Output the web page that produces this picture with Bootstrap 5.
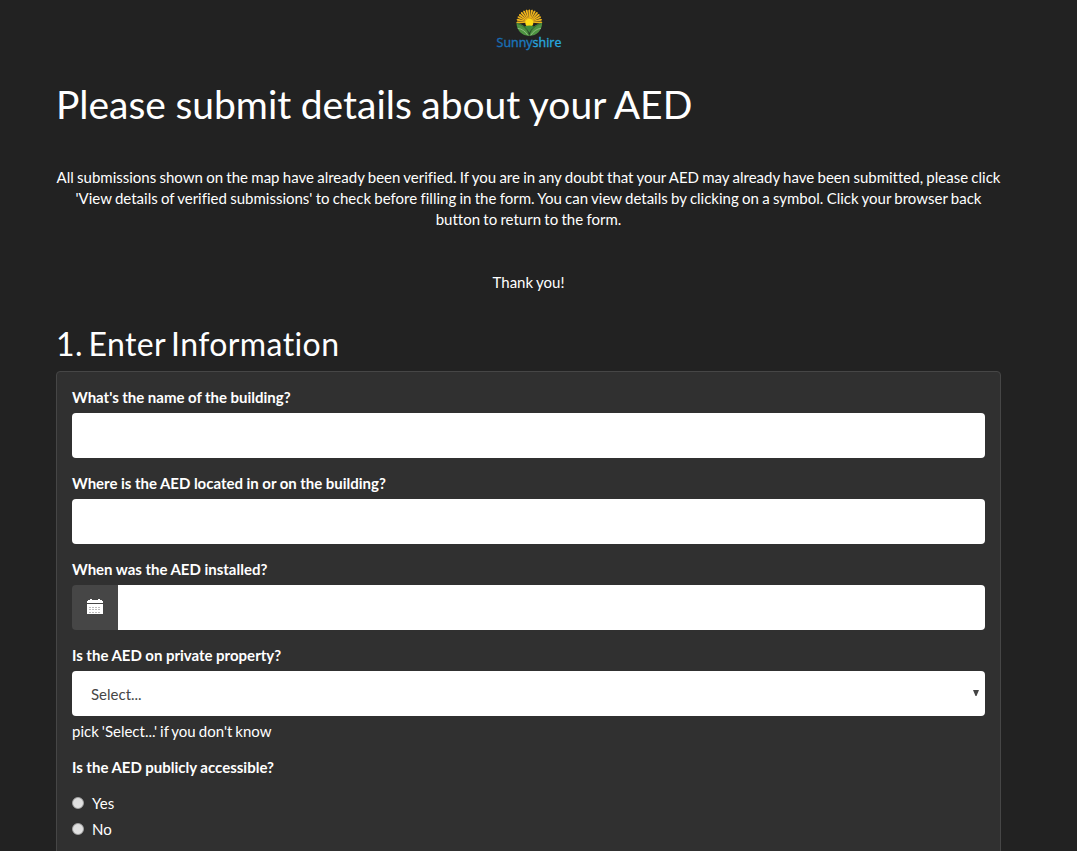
<!DOCTYPE html>
<html lang="en">
<head>
  <meta charset="UTF-8" />
  <meta name="viewport" content="width=device-width, initial-scale=1" />
  <title>Submit AED details</title>
  <!-- Bootstrap CSS -->
  <link
    href="https://cdn.jsdelivr.net/npm/bootstrap@5.3.2/dist/css/bootstrap.min.css"
    rel="stylesheet"
  />
  <style>
    html,
    body {
      height: 100%;
      overflow: hidden;
    }
    body {
      background: #222;
      color: #fff;
      font-family: Lato, 'Helvetica Neue', Arial, sans-serif;
      font-size: 15px;
      line-height: 21px;
      font-variant-ligatures: none;
      word-spacing: -0.55px;
    }
    .form-page {
      width: 945px;
      height: 851px;
      margin-left: 56px;
      overflow: hidden;
    }
    .site-logo {
      height: 83px;
      padding-top: 5px;
    }
    h1 {
      font-size: 39px;
      font-weight: 400;
      line-height: 43px;
      margin-bottom: 41px;
    }
    h2 {
      font-size: 32px;
      font-weight: 400;
      line-height: 35px;
      margin-bottom: 10px;
      letter-spacing: 0.4px;
      word-spacing: -3px;
    }
    .intro p {
      margin-bottom: 42px;
    }
    .intro p:last-child {
      margin-bottom: 33px;
    }
    .survey-panel {
      background: #303030;
      color: #fff;
      border: 1px solid #464646;
      border-radius: 4px;
      padding: 15px;
      min-height: 600px;
    }
    .question {
      margin-bottom: 15px;
    }
    .form-label {
      display: block;
      font-weight: 700;
      margin-bottom: 5px;
      word-spacing: -0.15px;
    }
    .form-control,
    .form-select {
      height: 45px;
      padding: 10px 15px 10px 19px;
      border: 0;
      border-radius: 4px;
      font-size: 15px;
      line-height: 21px;
      color: #464646;
      background-color: #fff;
    }
    .form-select {
      padding-top: 11px;
      background-image: url("data:image/svg+xml,%3Csvg xmlns='http://www.w3.org/2000/svg' viewBox='0 0 6 6'%3E%3Cpath d='M0 0h6L3.5 6h-1z' fill='%23444'/%3E%3C/svg%3E");
      background-size: 6px 6px;
      background-position: right 6px top 19px;
    }
    .input-group-text {
      width: 47px;
      height: 45px;
      padding: 0 1px 2px 0;
      border: 0;
      border-radius: 4px;
      background: #464646;
      color: #fff;
    }
    .help-line {
      margin-top: 5px;
      word-spacing: -0.8px;
    }
    .choice {
      gap: 8px;
      margin-top: 15px;
    }
    .choice + .choice {
      margin-top: 5px;
    }
    .choice input {
      appearance: none;
      width: 12px;
      height: 12px;
      margin: 0 0 1px;
      border: 1px solid #a5a5a5;
      border-radius: 50%;
      background: linear-gradient(#ddd, #e2e2e2);
    }
  </style>
</head>
<body>
  <main class="form-page">
    <div class="site-logo text-center">
      <svg class="d-block mx-auto" width="70" height="50" viewBox="0 0 70 50" role="img" aria-label="Sunnyshire">
        <defs>
          <linearGradient id="wordFill">
            <stop offset="0" stop-color="#1769b0" />
            <stop offset=".54" stop-color="#1b7fc4" />
            <stop offset=".58" stop-color="#27a8e0" />
            <stop offset="1" stop-color="#27a8e0" />
          </linearGradient>
        </defs>
        <g id="rays" fill="#f0b41c"></g>
        <circle cx="35.3" cy="17.8" r="4" fill="#ffdc16" />
        <!-- fields -->
        <path d="M22.5 17.8C28.8 19 33.8 23 35.3 30.9C28 30.9 22.5 25.5 22.5 17.8z" fill="#4f9442" />
        <path d="M48.1 17.8C41.8 19 36.8 23 35.3 30.9C42.6 30.9 48.1 25.5 48.1 17.8z" fill="#4f9442" />
        <path d="M30.5 21.4Q35.3 19.4 40.1 21.4Q37 24.5 35.3 28Q33.6 24.5 30.5 21.4z" fill="#3f8a3c" />
        <path d="M23.3 18.6Q32 21 35.3 30M47.3 18.6Q38.6 21 35.3 30" fill="none" stroke="#2b5a2c" stroke-width=".6" />
        <path d="M23.6 23.3Q30 24.2 33.8 30.3M47 23.3Q40.6 24.2 36.8 30.3" fill="none" stroke="#b3d5a5" stroke-width=".6" />
        <text x="2.6" y="42.2" font-family="Open Sans, sans-serif" font-size="13.2" font-weight="500" textLength="64.8" lengthAdjust="spacingAndGlyphs" fill="url(#wordFill)" stroke="url(#wordFill)" stroke-width=".35">Sunnyshire</text>
      </svg>
    </div>

    <h1>Please submit details about your AED</h1>

    <div class="intro text-center">
      <p>All submissions shown on the map have already been verified. If you are in any doubt that your AED may already have been submitted, please click 'View details of verified submissions' to check before filling in the form. You can view details by clicking on a symbol. Click your browser back button to return to the form.</p>
      <p>Thank you!</p>
    </div>

    <h2>1. Enter Information</h2>
    <form class="survey-panel">
      <div class="question">
        <label class="form-label" for="building">What's the name of the building?</label>
        <input id="building" type="text" class="form-control" />
      </div>
      <div class="question">
        <label class="form-label" for="location">Where is the AED located in or on the building?</label>
        <input id="location" type="text" class="form-control" />
      </div>
      <div class="question">
        <label class="form-label" for="installed">When was the AED installed?</label>
        <div class="input-group">
          <span class="input-group-text justify-content-center">
            <svg width="16" height="16" viewBox="0 0 16 16" fill="currentColor" shape-rendering="crispEdges">
              <path d="M1 1h2V0h2v1h6V0h2v1h2v1h1v2H0V2h1z" />
              <path d="M0 5h16v10H0z" />
              <path d="M2 8h2v1H2zM5 8h2v1H5zM8 8h2v1H8zM11 8h2v1h-2zM2 10h2v1H2zM5 10h2v1H5zM8 10h2v1H8zM11 10h2v1h-2zM2 13h2v1H2zM5 13h2v1H5zM8 13h2v1H8zM11 13h2v1h-2z" fill="#bbb" />
            </svg>
          </span>
          <input id="installed" type="text" class="form-control" />
        </div>
      </div>
      <div class="question">
        <label class="form-label" for="property">Is the AED on private property?</label>
        <select id="property" class="form-select">
          <option>Select...</option>
          <option>Yes</option>
          <option>No</option>
        </select>
        <div class="help-line">pick 'Select...' if you don't know</div>
      </div>
      <div class="question">
        <label class="form-label">Is the AED publicly accessible?</label>
        <label class="choice d-flex align-items-center"><input type="radio" name="access" /> Yes</label>
        <label class="choice d-flex align-items-center"><input type="radio" name="access" /> No</label>
      </div>
    </form>
  </main>

  <!-- Bootstrap JS + Popper -->
  <script src="https://cdn.jsdelivr.net/npm/bootstrap@5.3.2/dist/js/bootstrap.bundle.min.js"></script>
  <script>
    // fan of rays above the horizon
    const rays = document.getElementById('rays');
    for (let i = 0; i < 15; i++) {
      const ray = document.createElementNS('http://www.w3.org/2000/svg', 'path');
      ray.setAttribute('d', 'M34.8 14L34.3 5.2L35.3 4.2L36.3 5.2L35.8 14z');
      ray.setAttribute('transform', `rotate(${-91 + i * 13} 35.3 17.3)`);
      rays.appendChild(ray);
    }
  </script>
</body>
</html>
